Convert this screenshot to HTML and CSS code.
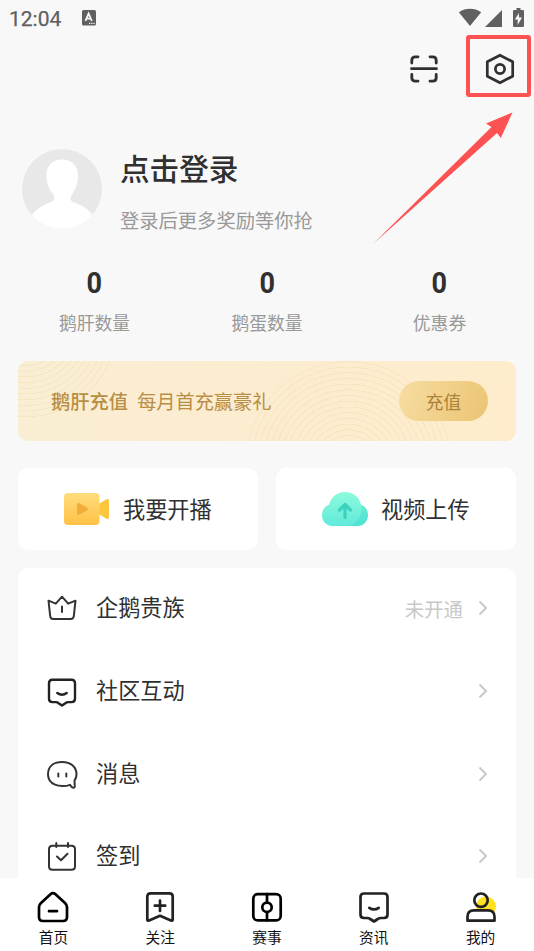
FILE: index.html
```html
<!DOCTYPE html>
<html lang="zh-CN">
<head>
<meta charset="utf-8">
<title>我的</title>
<link rel="stylesheet" href="styles.css">
</head>
<body>
<div class="screen">
  <header class="status">
    <span class="clock">12:04</span>
    <svg class="status-app" width="14" height="16" viewBox="0 0 14 16"><rect width="14" height="15.5" rx="1.5" fill="#606060"/><path d="M3.4 11 6.6 3.6 9.8 11M4.6 8.7h4" fill="none" stroke="#f8f8f8" stroke-width="1.8"/><path d="M7 13.4h1.3M9.2 13.4h1.3M11.4 13.4h1.3" stroke="#f8f8f8" stroke-width="1.2"/></svg>
    <svg class="status-icons" width="68" height="20" viewBox="0 0 68 20" fill="#606060"><path d="M.8 4.200C7.500-.4 16.500-.4 23.200 4.200L12 18Z"/><path d="M44 2v17H27Z"/><path d="M56 2h2.500V0h4v2H65q1 0 1 1v15q0 1-1 1h-9q-1 0-1-1V3q0-1 1-1Z"/><path d="m61 5-4.200 6.500h2.900V17l4.300-7.500h-3Z" fill="#f8f8f8"/></svg>
  </header>
  <div class="toolbar">
    <svg width="28" height="28" viewBox="0 0 28 28" fill="none" stroke="#303030" stroke-width="2.800" stroke-linecap="round"><path d="M1.800 8V5.300q0-3.500 3.500-3.500H8M20 1.800h2.700q3.500 0 3.500 3.500V8M26.200 19.500v3.200q0 3.500-3.500 3.500H20M8 26.200H5.300q-3.500 0-3.500-3.500v-3.200M1.500 13.700h25"/></svg>
    <svg width="30" height="32" viewBox="0 0 30 32" fill="none" stroke="#303030" stroke-width="2.700" stroke-linejoin="round"><path d="M15 2.200 27.700 8.800v14.400L15 29.800 2.300 23.200V8.800Z"/><circle cx="15" cy="16" r="4.600"/></svg>
  </div>
  <section class="profile">
    <svg class="avatar" width="80" height="80" viewBox="0 0 80 80"><defs><clipPath id="face"><circle cx="40" cy="40" r="40"/></clipPath></defs><g clip-path="url(#face)"><path fill="#e8e8e8" d="M0 0h80v80H0z"/><path fill="#fff" d="M40 10.500c10 0 16 6.500 16 16C56 38 51 43 49 47c-1 3-.5 5 2 6 10 3.500 15 7 19.500 13L80 82H0L10 66c4.500-6 10-9.500 19-13 3-1 4-3 3-6-2-4-7.500-9-7.500-20.500 0-9.500 5.500-16 15.500-16Z"/></g></svg>
    <div>
      <h1 class="login">点击登录</h1>
      <p class="hint">登录后更多奖励等你抢</p>
    </div>
  </section>
  <section class="stats">
    <div><b class="count">0</b><span class="stat-label">鹅肝数量</span></div>
    <div><b class="count">0</b><span class="stat-label">鹅蛋数量</span></div>
    <div><b class="count">0</b><span class="stat-label">优惠券</span></div>
  </section>
  <section class="banner">
    <strong class="banner-title">鹅肝充值</strong>
    <span class="banner-text">每月首充赢豪礼</span>
    <span class="recharge">充值</span>
  </section>
  <section class="actions">
    <div class="action">
      <svg width="46" height="34" viewBox="0 0 46 34"><defs><linearGradient id="cam" x2="0" y2="1"><stop stop-color="#ffdd7c"/><stop offset="1" stop-color="#ffc146"/></linearGradient></defs><path d="m34 12.500 8-5q3-1.500 3 1.500v16q0 3-3 1.500l-8-5Z" fill="#ffc53d"/><rect y="1" width="35.500" height="32" rx="4" fill="url(#cam)"/><path d="M13 12.500q0-2.500 2.200-1.300l8 4.500q1.500 1.300 0 2.600l-8 4.500Q13 24 13 21.500Z" fill="#f3ac39"/></svg>
      <span class="action-name">我要开播</span>
    </div>
    <div class="action">
      <svg width="46" height="34" viewBox="0 0 46 34"><defs><linearGradient id="cloud" x2="0" y2="1"><stop stop-color="#8dfbdc"/><stop offset="1" stop-color="#60eadb"/></linearGradient><linearGradient id="puff" x2="0" y2="1"><stop stop-color="#66ebd2"/><stop offset="1" stop-color="#4ce1d5"/></linearGradient></defs><path d="M36 12.500c6 0 10 4.500 10 10.500s-4 11-10.500 11H26Z" fill="url(#puff)"/><path d="M10.500 34C4 34 0 29 0 23.300c0-5.500 3-9.500 7-10.600C9 5 15 0 23 0c9.500 0 16.500 7 16.500 16.500C39.500 25 34 31.500 27 34Z" fill="url(#cloud)"/><path d="M23 25.500V13M17.500 18l5.500-5.500 5.500 5.500" fill="none" stroke="#3bd1bc" stroke-width="3.200" stroke-linecap="round" stroke-linejoin="round"/></svg>
      <span class="action-name">视频上传</span>
    </div>
  </section>
  <section class="menu">
    <div class="row">
      <svg class="icon" viewBox="0 0 32 32"><path d="m2.500 8.700 7.300 3 6.200-7 6.200 7 7.300-3-1.700 15.500q-.3 2.800-3 2.800H7.200q-2.700 0-3-2.800ZM16 14.500v5.500"/></svg>
      <span class="name">企鹅贵族</span><span class="state">未开通</span>
      <svg class="chevron" viewBox="0 0 10 16"><path d="m1.500 1.500 6.500 6.500-6.500 6.500"/></svg>
    </div>
    <div class="row">
      <svg class="icon strong" viewBox="0 0 32 32"><path d="M6.500 4.800h19q3.500 0 3.500 3.500v15.500q0 3.300-3.500 3.300h-3.300q-1.500 0-2.400.8L16 30.600l-3.800-2.700q-.9-.8-2.400-.8H6.500Q3 27.100 3 23.800V8.300q0-3.500 3.500-3.500ZM11.300 18q4.700 3.500 9.400 0"/></svg>
      <span class="name">社区互动</span>
      <svg class="chevron" viewBox="0 0 10 16"><path d="m1.500 1.500 6.500 6.500-6.500 6.500"/></svg>
    </div>
    <div class="row">
      <svg class="icon" viewBox="0 0 32 32"><path d="M24 26.800C20 28.500 13 28.500 9 26.700 4.500 24.700 2 21.200 2 16.500 2 8.500 7.500 4 16 4s14.500 4.500 14.500 12.500c0 2.500-.8 4.500-2 6.200l.3 5.800q-.1 1.500-1.700 1.200-1.700-.4-3.100-2.900ZM12.300 15.500v3M20.300 15.500v3"/></svg>
      <span class="name">消息</span>
      <svg class="chevron" viewBox="0 0 10 16"><path d="m1.500 1.500 6.500 6.500-6.500 6.500"/></svg>
    </div>
    <div class="row">
      <svg class="icon" viewBox="0 0 32 32"><path d="M6.500 5.700h19q3.500 0 3.500 3.500v17q0 3.500-3.500 3.500h-19Q3 29.700 3 26.200v-17q0-3.500 3.500-3.500ZM10.300 3v4M22 3v4M11 16.500l4 3.800 6.500-6.500"/></svg>
      <span class="name">签到</span>
      <svg class="chevron" viewBox="0 0 10 16"><path d="m1.500 1.500 6.500 6.500-6.500 6.500"/></svg>
    </div>
  </section>
  <nav class="tabs">
    <div class="tab"><svg class="tab-icon home" viewBox="0 0 34 34"><path d="M5 13 14.500 4.200q2.500-2.200 5 0L29 13q2 2 2 4v10q0 4-4 4H7q-4 0-4-4V17q0-2 2-4ZM13 21.200h8"/></svg><span>首页</span></div>
    <div class="tab"><svg class="tab-icon" viewBox="0 0 34 34"><path d="M7.500 3.300h19q3.200 0 3.200 3.200v23q0 1.800-1.800 1L17 25.800 6.100 30.500q-1.800.8-1.800-1v-23q0-3.200 3.200-3.200ZM17 10.500v10.400M11.800 15.700h10.400"/></svg><span>关注</span></div>
    <div class="tab"><svg class="tab-icon home" viewBox="0 0 34 34"><rect x="3.300" y="4.200" width="27.400" height="26.200" rx="4.500"/><path d="M17 4v8.500M17 22v8.500"/><circle cx="17" cy="17.300" r="4.700"/></svg><span>赛事</span></div>
    <div class="tab"><svg class="tab-icon" viewBox="0 0 34 34"><path d="M7 3.500h20q3.500 0 3.500 3.500v17.500q0 3.500-3.500 3.500h-3q-2 0-3.200 1L17 31.500 13.200 29q-1.200-1-3.200-1H7q-3.500 0-3.500-3.500V7Q3.500 3.500 7 3.500ZM12.300 17.800q4.700 3.300 9.400 0"/></svg><span>资讯</span></div>
    <div class="tab"><svg class="tab-icon" viewBox="0 0 34 34"><circle cx="22" cy="16.500" r="10" fill="#ffe11f" stroke="none"/><path d="M3.500 30.700v-3.900q0-6.400 6.500-6.400h14q6.500 0 6.500 6.400v3.900Z" fill="#fff"/><circle cx="17" cy="10.200" r="6.700"/></svg><span>我的</span></div>
  </nav>
  <svg class="callout" width="534" height="260" viewBox="0 0 534 260"><rect x="468" y="37" width="61" height="58" rx="1" fill="none" stroke="#fd5252" stroke-width="4"/><path d="m512.500 112.500-26.500 11 5.500 3.500L373 244l124-111 3.800 5Z" fill="#fd5252"/></svg>
</div>
</body>
</html>
```
FILE: styles.css
```css
* { box-sizing: border-box; }
body, h1, p { margin: 0; }
body { background: #f8f8f8; font-family: "Noto Sans CJK SC", sans-serif; color: #303030; }
svg { display: block; flex: none; }
.screen { position: relative; display: flex; flex-direction: column; height: 951px; overflow: hidden; }
.status { display: flex; align-items: center; height: 36px; padding: 0 8px 0 9px; color: #606060; flex: none; }
.clock { width: 73px; font: 400 21px/36px Roboto, sans-serif; -webkit-text-stroke: .25px #606060; padding-top: 1px; }
.status-icons { margin-left: auto; }
.toolbar { display: flex; align-items: center; justify-content: flex-end; gap: 47px; height: 65px; padding-right: 19px; flex: none; }
.profile { display: flex; gap: 18px; height: 159px; padding: 48px 22px 0; flex: none; }
.login { margin-top: -1px; font-size: 29.600px; font-weight: 500; line-height: 40px; }
.hint { margin-top: 12px; font-size: 19.300px; line-height: 40px; color: #999; }
.stats { display: grid; grid-template-columns: repeat(3, 172.500px); justify-content: center; height: 101px; padding-top: 4px; flex: none; text-align: center; }
.count { display: block; font: 700 30px/38px Roboto, sans-serif; transform: scaleX(.9); }
.stat-label { display: block; margin-top: 1px; font-size: 17.800px; line-height: 38px; color: #999; }
.banner { position: relative; display: flex; align-items: center; height: 80px; margin: 0 18px; padding: 0 28px 0 33px; flex: none; overflow: hidden; border-radius: 10px; color: #b88e45; background: linear-gradient(100deg, #f9eed3, #fcecd0 45%, #feeccc); }
.banner::before, .banner::after { content: ""; position: absolute; border-radius: 50%; background: repeating-radial-gradient(circle, transparent 0 4.500px, #f0dcae88 5.200px 5.700px); }
.banner::before { width: 190px; height: 190px; left: -87px; top: -130px; }
.banner::after { width: 205px; height: 205px; left: 228px; top: 0; }
.banner > * { position: relative; z-index: 1; }
.banner-title { font-size: 19.300px; font-weight: 500; }
.banner-text { margin-left: 9px; font-size: 19.200px; }
.recharge { width: 89px; height: 40px; margin-left: auto; border-radius: 20px; background: linear-gradient(110deg, #f7dda2, #ebc473); color: #ac8239; font-size: 17.700px; line-height: 40px; text-align: center; }
.actions { display: grid; grid-template-columns: 1fr 1fr; gap: 18px; margin: 27px 18px 18px; height: 82px; flex: none; }
.action { display: flex; align-items: center; gap: 13px; padding-left: 46px; border-radius: 10px; background: #fff; font-size: 22.200px; }
.action-name { padding-bottom: 2px; }
.menu { height: 310px; margin: 0 18px; overflow: hidden; background: #fff; border-radius: 10px 10px 0 0; flex: none; }
.row { display: flex; align-items: center; height: 82.700px; padding: 0 28px 2px; }
.icon { width: 32px; height: 32px; margin-right: 18px; fill: none; stroke: #333; stroke-width: 2; stroke-linejoin: round; stroke-linecap: round; }
.strong { stroke: #222; stroke-width: 2.400; }
.name { padding-bottom: 4px; font-size: 22.200px; }
.state { margin-left: auto; font-size: 19.400px; color: #c8c8c8; }
.chevron { width: 10px; height: 16px; margin-left: auto; fill: none; stroke: #c8c8c8; stroke-width: 2; }
.state + .chevron { margin-left: 15px; }
.tabs { display: grid; grid-template-columns: repeat(5, 1fr); height: 73px; padding-top: 12px; background: #fff; color: #111; font-size: 14.700px; line-height: 22px; text-align: center; flex: none; }
.tab-icon { width: 34px; height: 34px; margin: 0 auto 2px; fill: none; stroke: #222; stroke-width: 2.700; stroke-linecap: round; stroke-linejoin: round; }
.home { stroke: #000; }
.callout { position: absolute; left: 0; top: 0; pointer-events: none; }
```
